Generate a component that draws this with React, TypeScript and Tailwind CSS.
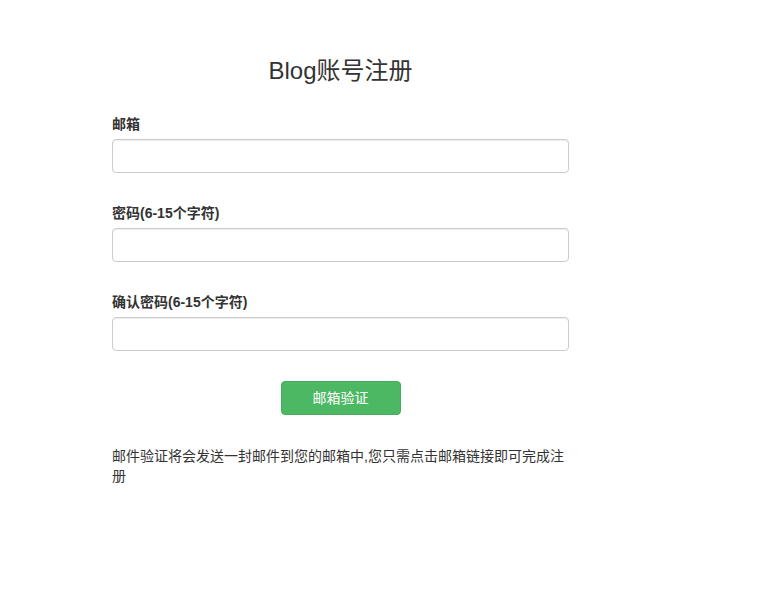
import React from "react";

const font = {
  fontFamily:
    '"Liberation Sans", "Noto Sans CJK SC", Helvetica, Arial, sans-serif',
};

const Field = ({ label, type }: { label: string; type: string }) => (
  <div className="flex flex-col mb-[30px]">
    <label className="text-[14px] leading-[20px] font-bold text-[#333] mb-[5px]">
      {label}
    </label>
    <input
      type={type}
      className="h-[34px] w-full rounded-[4px] border border-[#ccc] bg-white px-3 text-[14px] shadow-[inset_0_1px_1px_rgba(0,0,0,0.075)] outline-none"
    />
  </div>
);

const App = () => {
  return (
    <div className="min-h-screen bg-white text-[#333]" style={font}>
      <div className="ml-[112px] w-[457px] pt-[58px]">
        <h3 className="text-center text-[24px] leading-[26px] text-[#333] mb-[30px]">
          Blog账号注册
        </h3>
        <form>
          <Field label="邮箱" type="email" />
          <Field label="密码(6-15个字符)" type="password" />
          <Field label="确认密码(6-15个字符)" type="password" />
          <div className="flex justify-center">
            <button
              type="button"
              className="h-[34px] w-[120px] rounded-[4px] border border-[#45ad5b] bg-[#4db863] text-[14px] text-white"
            >
              邮箱验证
            </button>
          </div>
        </form>
        <p className="mt-[31px] text-[14px] leading-[20px] text-[#333]">
          邮件验证将会发送一封邮件到您的邮箱中,您只需点击邮箱链接即可完成注册
        </p>
      </div>
    </div>
  );
};

export default App;
